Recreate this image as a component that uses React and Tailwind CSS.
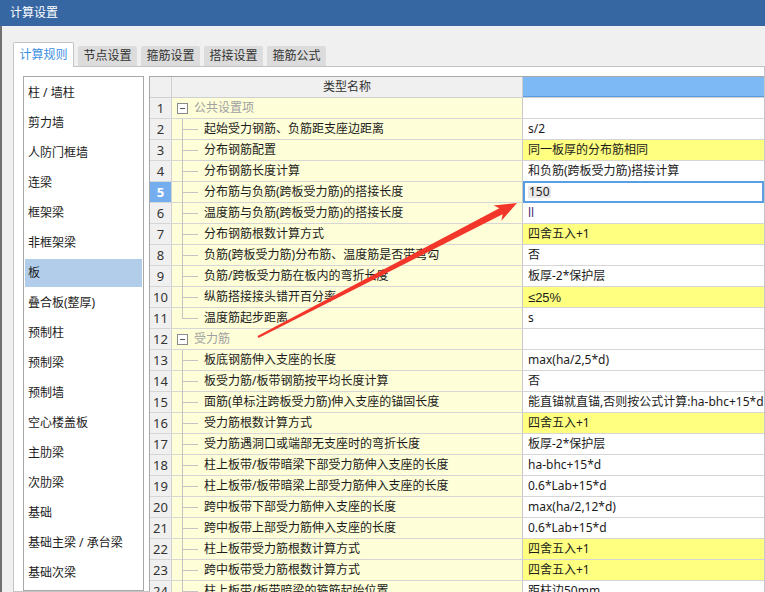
const tabs = ['计算规则', '节点设置', '箍筋设置', '搭接设置', '箍筋公式']

const components = [
  '柱 / 墙柱', '剪力墙', '人防门框墙', '连梁', '框架梁', '非框架梁', '板', '叠合板(整厚)',
  '预制柱', '预制梁', '预制墙', '空心楼盖板', '主肋梁', '次肋梁', '基础', '基础主梁 / 承台梁', '基础次梁',
]

// group: 分组行, hl: 黄色值, last: 分组最后一行
const rows = [
  { group: true, name: '公共设置项', value: '' },
  { name: '起始受力钢筋、负筋距支座边距离', value: 's/2' },
  { name: '分布钢筋配置', value: '同一板厚的分布筋相同', hl: true },
  { name: '分布钢筋长度计算', value: '和负筋(跨板受力筋)搭接计算' },
  { name: '分布筋与负筋(跨板受力筋)的搭接长度', value: '150', editing: true },
  { name: '温度筋与负筋(跨板受力筋)的搭接长度', value: 'll', cursor: true },
  { name: '分布钢筋根数计算方式', value: '四舍五入+1', hl: true },
  { name: '负筋(跨板受力筋)分布筋、温度筋是否带弯勾', value: '否' },
  { name: '负筋/跨板受力筋在板内的弯折长度', value: '板厚-2*保护层' },
  { name: '纵筋搭接接头错开百分率', value: '≤25%', hl: true, latin: true },
  { name: '温度筋起步距离', value: 's', last: true },
  { group: true, name: '受力筋', value: '' },
  { name: '板底钢筋伸入支座的长度', value: 'max(ha/2,5*d)' },
  { name: '板受力筋/板带钢筋按平均长度计算', value: '否' },
  { name: '面筋(单标注跨板受力筋)伸入支座的锚固长度', value: '能直锚就直锚,否则按公式计算:ha-bhc+15*d' },
  { name: '受力筋根数计算方式', value: '四舍五入+1', hl: true },
  { name: '受力筋遇洞口或端部无支座时的弯折长度', value: '板厚-2*保护层' },
  { name: '柱上板带/板带暗梁下部受力筋伸入支座的长度', value: 'ha-bhc+15*d' },
  { name: '柱上板带/板带暗梁上部受力筋伸入支座的长度', value: '0.6*Lab+15*d' },
  { name: '跨中板带下部受力筋伸入支座的长度', value: 'max(ha/2,12*d)' },
  { name: '跨中板带上部受力筋伸入支座的长度', value: '0.6*Lab+15*d' },
  { name: '柱上板带受力筋根数计算方式', value: '四舍五入+1', hl: true },
  { name: '跨中板带受力筋根数计算方式', value: '四舍五入+1', hl: true },
  { name: '柱上板带/板带暗梁的箍筋起始位置', value: '距柱边50mm' },
]

function NameCell({ row }) {
  if (row.group) {
    return (
      <div className="w-[351px] h-full bg-[#fefed8] border-r border-[#c8c8c8] flex items-center">
        <div className="ml-[5px] w-[11px] h-[11px] border border-[#8a8a8a] bg-white flex items-center justify-center">
          <div className="w-[5px] h-px bg-[#555]" />
        </div>
        <span className="ml-[6px] text-[#a0a0a0]">{row.name}</span>
      </div>
    )
  }
  return (
    <div className="w-[351px] h-full bg-[#fefed8] border-r border-[#c8c8c8] flex items-center">
      <div className="ml-[10px] w-[16px] h-full relative">
        <div className={`absolute left-0 top-0 w-px bg-[#c4c4c4] ${row.last ? 'h-1/2' : '-bottom-px'}`} />
        <div className="absolute left-0 top-1/2 w-[16px] h-px bg-[#c4c4c4]" />
      </div>
      <span className="ml-[6px] whitespace-nowrap">{row.name}</span>
    </div>
  )
}

function ValueCell({ row }) {
  if (row.editing) {
    return (
      <div className="flex-1 h-[22px] -mt-px -mb-px border-2 border-[#5b9de3] bg-white flex items-center pl-[3px] z-10">
        <span className="bg-[#e8e8e8] px-px">{row.value}</span>
      </div>
    )
  }
  return (
    <div className={`flex-1 h-full flex items-center pl-[5px] whitespace-nowrap overflow-hidden ${row.hl ? 'bg-[#ffff80]' : 'bg-white'} ${row.cursor ? 'text-[#4a2a70]' : ''} ${row.latin ? "font-['Liberation_Sans',sans-serif] text-[13px]" : ''}`}>
      {row.value}
    </div>
  )
}

export default function App() {
  return (
    <div className="w-[765px] h-[592px] overflow-hidden relative bg-[#f0f0f0] flex flex-col text-[12px] leading-none text-[#1b1b1b] font-['Noto_Sans','Noto_Sans_CJK_SC',sans-serif]">
      {/* 标题栏 */}
      <div className="h-[26px] shrink-0 bg-[#3767a3] text-white flex items-center pl-[10px]">计算设置</div>

      <div className="flex-1 flex min-h-0">
        <div className="w-[2px] bg-[#707070]" />
        <div className="flex-1 pl-[11px] pt-[16px] flex flex-col min-h-0">
          {/* 标签页 */}
          <div className="h-[24px] flex items-end gap-[4px] shrink-0">
            {tabs.map((t, i) =>
              i === 0 ? (
                <div key={t} className="relative z-10 h-[25px] -mb-px w-[61px] bg-white border border-b-0 border-[#c4c4c4] rounded-t-[2px] flex items-center justify-center text-[#3b8fe3]">
                  {t}
                </div>
              ) : (
                <div key={t} className="h-[20px] w-[59px] bg-[#dcdcdc] rounded-t-[2px] flex items-center justify-center text-[#333]">
                  {t}
                </div>
              )
            )}
          </div>

          {/* 内容面板 */}
          <div className="flex-1 bg-white border border-[#c4c4c4] flex pl-[9px] pt-[9px] gap-[5px] min-h-0">
            {/* 构件列表 */}
            <div className="w-[121px] shrink-0 border border-[#a8a8a8] flex flex-col px-px">
              {components.map((c) => (
                <div
                  key={c}
                  className={`h-[28px] mt-[2px] shrink-0 flex items-center pl-[3px] whitespace-nowrap ${c === '板' ? 'bg-[#b2cdea]' : ''}`}
                >
                  {c}
                </div>
              ))}
            </div>

            {/* 规则表格 */}
            <div className="flex-1 border-l border-t border-[#a8a8a8] flex flex-col min-w-0">
              <div className="h-[21px] shrink-0 flex border-b border-[#d0d0d0]">
                <div className="w-[22px] h-full bg-[#f0f0f0] border-r border-[#d0d0d0]" />
                <div className="w-[351px] h-full bg-[#f0f0f0] border-r border-[#d0d0d0] flex items-center justify-center text-[#333]">
                  类型名称
                </div>
                <div className="flex-1 h-full bg-[#7db9f5] border-b border-[#5d9be0]" />
              </div>
              {rows.map((row, i) => (
                <div key={i} className="h-[21px] shrink-0 flex border-b border-[#d6d6d6]">
                  <div
                    className={`w-[22px] h-full border-r border-[#d0d0d0] flex items-center justify-center text-[13px] ${i === 4 ? 'bg-[#75aeee] text-white font-bold' : 'bg-[#f0f0f0] text-[#333]'}`}
                  >
                    {i + 1}
                  </div>
                  <NameCell row={row} />
                  <ValueCell row={row} />
                </div>
              ))}
            </div>
          </div>
        </div>
      </div>

      {/* 标注箭头 */}
      <svg className="absolute left-0 top-0 pointer-events-none" width="765" height="592" viewBox="0 0 765 592">
        <polygon
          fill="#f2362a"
          points="258.5,337.9 502.6,214.3 501.4,220.7 517,203 493.6,205.6 499.4,208.2 257.5,336.1"
        />
      </svg>
    </div>
  )
}
